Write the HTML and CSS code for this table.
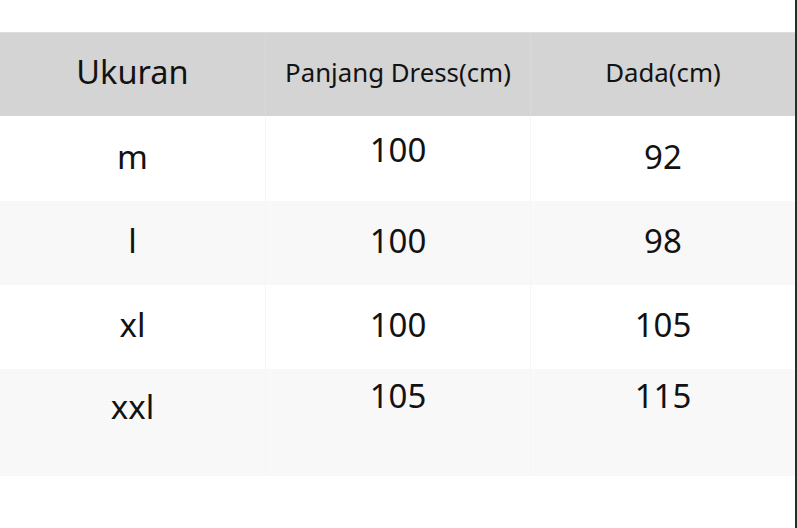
FILE: index.html
```html
<!DOCTYPE html>
<html lang="id">
<head>
<meta charset="utf-8">
<title>Ukuran</title>
<link rel="stylesheet" href="styles.css">
</head>
<body>
<div class="page">
  <div class="sheet">
    <div class="size-table">
      <div class="row head">
        <div class="cell big">Ukuran</div>
        <div class="cell">Panjang Dress(cm)</div>
        <div class="cell">Dada(cm)</div>
      </div>
      <div class="row r1">
        <div class="cell">m</div>
        <div class="cell up">100</div>
        <div class="cell">92</div>
      </div>
      <div class="row r2 alt">
        <div class="cell">l</div>
        <div class="cell">100</div>
        <div class="cell">98</div>
      </div>
      <div class="row r3">
        <div class="cell">xl</div>
        <div class="cell">100</div>
        <div class="cell">105</div>
      </div>
      <div class="row r4 alt">
        <div class="cell top-a">xxl</div>
        <div class="cell top-b">105</div>
        <div class="cell top-b">115</div>
      </div>
    </div>
  </div>
  <div class="edge"></div>
</div>
</body>
</html>
```

FILE: styles.css
```css
html, body {
  margin: 0;
  padding: 0;
  background: #ffffff;
}

body {
  font-family: "Noto Sans", "Open Sans", sans-serif;
  color: #121212;
}

.page {
  display: flex;
  width: 797px;
  height: 528px;
}

.sheet {
  flex: 1;
  padding-top: 32px;
}

.edge {
  width: 2px;
  background: #2b2b2b;
}

.size-table {
  width: 795px;
  display: flex;
  flex-direction: column;
}

.row {
  display: grid;
  grid-template-columns: 265px 265px 265px;
}

.cell {
  display: flex;
  align-items: center;
  justify-content: center;
  font-size: 33px;
  line-height: 44px;
  white-space: nowrap;
}

.cell + .cell {
  border-left: 1px solid #f6f6f6;
}

.head {
  height: 84px;
  background: #d4d4d4;
  border-top: 1px solid #dedede;
  box-sizing: border-box;
}

.head .cell {
  font-size: 25.8px;
  padding-bottom: 5px;
}

.head .cell + .cell {
  border-left: 1px solid #d9d9d9;
}

.head .big {
  font-size: 32.5px;
  padding-bottom: 6px;
}

.r1 { height: 85px; }
.r2 { height: 84px; }
.r3 { height: 84px; }
.r4 { height: 107px; }

.alt {
  background: #f8f8f8;
}

.alt .cell + .cell {
  border-left: 1px solid #f5f5f5;
}

.r1 .cell,
.r2 .cell,
.r3 .cell {
  padding-bottom: 4px;
}

.r1 .up {
  padding-bottom: 17px;
}

.r4 .cell {
  align-items: flex-start;
}

.r4 .top-a {
  padding-top: 16px;
}

.r4 .top-b {
  padding-top: 5px;
}
```
